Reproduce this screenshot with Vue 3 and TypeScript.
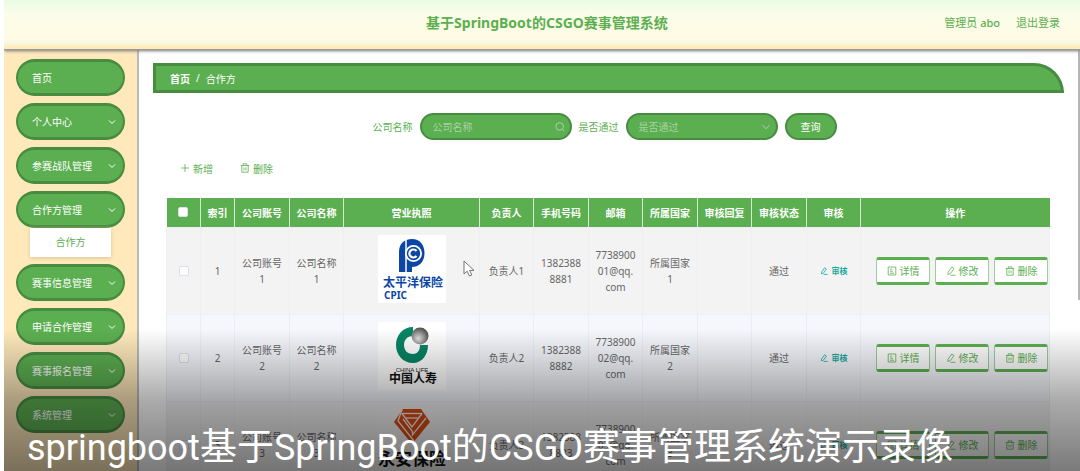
<script setup lang="ts">
interface MenuItem {
  label: string
  arrow: boolean
  child?: string
}

interface Partner {
  id: number
  account: string
  company: string
  owner: string
  phone: string
  email: string
  country: string
}

const menu: MenuItem[] = [
  { label: '首页', arrow: false },
  { label: '个人中心', arrow: true },
  { label: '参赛战队管理', arrow: true },
  { label: '合作方管理', arrow: true, child: '合作方' },
  { label: '赛事信息管理', arrow: true },
  { label: '申请合作管理', arrow: true },
  { label: '赛事报名管理', arrow: true },
  { label: '系统管理', arrow: true },
]

const headings: string[] = [
  '索引', '公司账号', '公司名称', '营业执照', '负责人', '手机号码', '邮箱',
  '所属国家', '审核回复', '审核状态', '审核', '操作',
]

const partners: Partner[] = [1, 2, 3].map((n) => ({
  id: n,
  account: `公司账号\n${n}`,
  company: `公司名称\n${n}`,
  owner: `负责人${n}`,
  phone: `1382388\n888${n}`,
  email: `7738900\n0${n}@qq.\ncom`,
  country: `所属国家\n${n}`,
}))
</script>

<template>
  <div class="page">
    <header class="top">
      <h1>基于SpringBoot的CSGO赛事管理系统</h1>
      <div class="user">
        <span>管理员 <b>abo</b></span>
        <a href="#">退出登录</a>
      </div>
    </header>

    <div class="body">
      <nav class="side">
        <div v-for="item in menu" :key="item.label" class="entry">
          <button type="button" class="pill">
            <span>{{ item.label }}</span>
            <svg v-if="item.arrow" class="chev" viewBox="0 0 8 8"><path d="M1 2.5 4 5.5 7 2.5" /></svg>
          </button>
          <a v-if="item.child" href="#" class="child">{{ item.child }}</a>
        </div>
      </nav>

      <main class="main">
        <div class="crumbs"><b>首页</b><span class="slash">/</span><span>合作方</span></div>

        <form class="search" @submit.prevent>
          <label for="company">公司名称</label>
          <div class="field">
            <input id="company" type="text" placeholder="公司名称" />
            <svg class="field-icon" viewBox="0 0 10 10"><circle cx="4.7" cy="4.5" r="3.8" /><path d="M7.4 7.3 9.2 9.2" /></svg>
          </div>
          <label for="passed">是否通过</label>
          <div class="field">
            <select id="passed">
              <option>是否通过</option>
            </select>
            <svg class="field-icon" viewBox="0 0 10 10"><path d="M1.5 3.2 5 6.8 8.5 3.2" /></svg>
          </div>
          <button type="submit" class="query">查询</button>
        </form>

        <div class="tools">
          <button type="button">
            <svg viewBox="0 0 10 10"><path d="M5 1V9M1 5H9" /></svg>新增
          </button>
          <button type="button">
            <svg viewBox="0 0 10 10"><path d="M.8 2.5H9.2M3.2 2.3V.8H6.8V2.3M1.8 2.6V9.2H8.2V2.6M4 4.4V7.4M6 4.4V7.4" /></svg>删除
          </button>
        </div>

        <table>
          <colgroup>
            <col class="c-small" /><col class="c-small" /><col class="c-wide" /><col class="c-mid" />
            <col class="c-image" /><col class="c-mid" /><col class="c-wide" /><col class="c-mid" />
            <col class="c-wide" /><col class="c-mid" /><col class="c-wide" /><col class="c-mid" /><col />
          </colgroup>
          <thead>
            <tr>
              <th><input type="checkbox" aria-label="全选" /></th>
              <th v-for="h in headings" :key="h">{{ h }}</th>
            </tr>
          </thead>
          <tbody>
            <tr v-for="p in partners" :key="p.id">
              <td><input type="checkbox" :aria-label="p.owner" /></td>
              <td>{{ p.id }}</td>
              <td>{{ p.account }}</td>
              <td>{{ p.company }}</td>
              <td class="license">
                <svg v-if="p.id === 1" class="logo" viewBox="0 0 68 68">
                  <rect width="68" height="68" fill="#fff" />
                  <path d="M21 37V17C21 9 26 4 34 4C42 4 46.500 10 46.500 18C46.500 27 41 32 34 32V37Z" fill="#0b46a5" />
                  <path d="M28 4.500V37.500" stroke="#fff" stroke-width="1.500" />
                  <circle cx="35.500" cy="18.500" r="7.600" fill="#0b46a5" stroke="#fff" stroke-width="1.800" />
                  <path d="M38.500 16A4 4 0 1 0 38.500 21" fill="none" stroke="#fff" stroke-width="2.200" />
                  <text x="5" y="52" class="logo-cn" font-size="12" fill="#0b46a5">太平洋保险</text>
                  <text x="6" y="64" class="logo-en" font-size="10" fill="#0b46a5">CPIC</text>
                </svg>
                <svg v-else-if="p.id === 2" class="logo" viewBox="0 0 68 68">
                  <defs>
                    <radialGradient id="ball" cx="40%" cy="65%" r="65%">
                      <stop offset="0" stop-color="#e4e4e4" /><stop offset="1" stop-color="#4d4d4d" />
                    </radialGradient>
                  </defs>
                  <rect width="68" height="68" fill="#fff" />
                  <path d="M35 5C25 5 18 13 18 23C18 33 25 41 35 41C44 41 50 33 50 23H42C42 29 39 32 35 32C29 32 26 28 26 23C26 18 29 14 35 14Z" fill="#068565" />
                  <circle cx="42" cy="14" r="8.500" fill="url(#ball)" />
                  <text x="34" y="50" class="logo-tag" text-anchor="middle" font-size="6" fill="#222">CHINA LIFE</text>
                  <text x="35" y="61" class="logo-cn" text-anchor="middle" font-size="12" fill="#111">中国人寿</text>
                </svg>
                <svg v-else class="logo" viewBox="0 0 68 68">
                  <rect width="68" height="68" fill="#fff" fill-opacity=".1" />
                  <path d="M25 0H43L52 13 34 35 16 13Z" fill="#dd4a12" />
                  <g fill="none" stroke="#f3f3f3" stroke-width="1.300">
                    <path d="M24 4.500H44" />
                    <path d="M28 9H40" />
                    <path d="M24 1 20 12 36 32" />
                    <path d="M24 4.500 34 18 44 4.500" />
                    <path d="M25 10 34.500 22.500V26L48 9" />
                  </g>
                  <text x="34" y="56" class="logo-cn" text-anchor="middle" font-size="17" fill="#111">永安保险</text>
                  <text x="34" y="66" class="logo-tag" text-anchor="middle" font-size="6" fill="#222">YONG AN INSURANCE</text>
                </svg>
                <svg v-if="p.id === 1" class="cursor" viewBox="0 0 12 17">
                  <path d="M1 1V14L4.200 11.200 6.400 16 8.800 15 6.600 10.400H11Z" fill="#fff" stroke="#666" stroke-width=".9" />
                </svg>
              </td>
              <td>{{ p.owner }}</td>
              <td>{{ p.phone }}</td>
              <td>{{ p.email }}</td>
              <td>{{ p.country }}</td>
              <td></td>
              <td>通过</td>
              <td>
                <button type="button" class="audit">
                  <svg viewBox="0 0 10 10"><path d="M2 6.300 5.800 1 8 2.600 4.200 7.800 1.800 8.400ZM4.500 9.300H9.500" /></svg>审核
                </button>
              </td>
              <td>
                <div class="ops">
                  <button type="button">
                    <svg viewBox="0 0 10 10"><path d="M1.200 1H8.800V9H1.200ZM3 3.200H5M3 5.200H6M3 7.200H7" /></svg>详情
                  </button>
                  <button type="button">
                    <svg viewBox="0 0 10 10"><path d="M2 6.300 5.800 1 8 2.600 4.200 7.800 1.800 8.400ZM4.500 9.300H9.500" /></svg>修改
                  </button>
                  <button type="button">
                    <svg viewBox="0 0 10 10"><path d="M.8 2.500H9.200M3.200 2.300V.8H6.800V2.300M1.800 2.600V9.200H8.200V2.600M4 4.400V7.400M6 4.400V7.400" /></svg>删除
                  </button>
                </div>
              </td>
            </tr>
          </tbody>
        </table>
        <div class="scroll-thumb"></div>
      </main>
    </div>

    <div class="caption">springboot<span>基于</span>SpringBoot<span>的</span>CSGO<span>赛事管理系统演示录像</span></div>
  </div>
</template>

<style>
body {
  background: #fff;
}
</style>

<style scoped>
.page {
  position: relative;
  display: flex;
  flex-direction: column;
  height: 100vh;
  margin-left: 4px;
  overflow: hidden;
  font-family: "Noto Sans", "Noto Sans CJK SC", sans-serif;
  font-size: 10px;
  color: #5caf51;
}

* {
  box-sizing: border-box;
}

button,
input,
select {
  margin: 0;
  font: inherit;
}

button {
  padding: 0;
  border: 0;
  background: none;
  color: inherit;
}

a {
  color: inherit;
  text-decoration: none;
}

svg {
  flex: none;
  fill: none;
  stroke: currentColor;
}

.top {
  position: relative;
  z-index: 1;
  display: grid;
  grid-template-columns: 1fr auto 1fr;
  align-items: center;
  flex: none;
  height: 50px;
  padding: 0 20px 5px 30px;
  border-bottom: 1px solid #999;
  background: linear-gradient(#e8fbe4, #fafde9 28%, #fffbe5 80%, #f6f6df 90%, #ffedb9 94%);
  box-shadow: 0 1px 3px #777;
}

h1 {
  grid-column: 2;
  margin: 0;
  font-size: 14px;
  font-weight: 700;
}

.user {
  display: flex;
  justify-content: flex-end;
  gap: 16px;
  font-size: 11px;
}

.user b {
  font-weight: 500;
}

.body {
  display: flex;
  flex: 1;
  min-height: 0;
}

.side {
  display: flex;
  flex: none;
  flex-direction: column;
  gap: 7px;
  width: 135px;
  padding: 9px 12px 0 12px;
  border-right: 2px solid #b9b9b9;
  background: #ffe9bb;
}

.entry {
  flex: none;
}

.pill {
  display: flex;
  align-items: center;
  justify-content: space-between;
  width: 100%;
  height: 37px;
  padding: 0 7px 0 14px;
  border: 3px solid #488c42;
  border-right-width: 2px;
  border-left-width: 2px;
  border-radius: 19px;
  background: #5caf51;
  color: #fff;
}

.chev {
  width: 8px;
  height: 8px;
}

.child {
  display: block;
  height: 29px;
  margin: 0 14px;
  background: #fff;
  box-shadow: 0 1px 4px #d9c391;
  line-height: 29px;
  text-align: center;
}

.main {
  position: relative;
  flex: 1;
  min-width: 0;
  padding: 13px 16px 0 14px;
}

.crumbs {
  display: flex;
  align-items: center;
  height: 30px;
  padding-left: 14px;
  border: 3px solid #488c42;
  border-radius: 0 30px 0 0;
  background: #5caf51;
  color: #fff;
}

.slash {
  margin: 0 6px;
}

.search {
  display: flex;
  align-items: center;
  justify-content: center;
  gap: 7px;
  margin-top: 20px;
  padding-right: 8px;
}

.field {
  position: relative;
  width: 152px;
}

.field input,
.field select,
.query {
  display: block;
  width: 100%;
  height: 27px;
  border: 2px solid #488c42;
  border-radius: 14px;
  background: #5caf51;
}

.field input,
.field select {
  padding: 0 24px 0 11px;
  appearance: none;
  color: #a9d3a2;
}

.field input::placeholder {
  color: #a9d3a2;
  opacity: 1;
}

.field-icon {
  position: absolute;
  top: 9px;
  right: 7px;
  width: 10px;
  height: 10px;
  color: #a9d3a2;
}

.search .query {
  width: 52px;
  color: #fff;
}

.tools {
  display: flex;
  gap: 27px;
  margin: 20px 0 22px 27px;
}

.tools button {
  display: flex;
  align-items: center;
  gap: 3px;
  height: 16px;
}

.tools svg,
.ops svg {
  width: 10px;
  height: 10px;
  stroke-width: .8;
}

table {
  width: calc(100% - 27px);
  margin-left: 13px;
  border-collapse: collapse;
  table-layout: fixed;
  color: #666;
  text-align: center;
}

.c-small {
  width: 34px;
}

.c-mid {
  width: 54px;
}

.c-wide {
  width: 55px;
}

.c-image {
  width: 136px;
}

th {
  height: 29px;
  padding: 0;
  border-left: 1px solid #d5ebd1;
  background: #5caf51;
  color: #fff;
  font-weight: 700;
}

th:first-child {
  border-left: 0;
}

td {
  height: 87px;
  padding: 0;
  border: 1px solid #ebeef5;
  line-height: 16px;
  white-space: pre-line;
}

tbody tr {
  background: #f3f3f3;
}

tbody tr:nth-child(2) {
  background: #f5f7fc;
}

input[type="checkbox"] {
  display: block;
  width: 10px;
  height: 10px;
  margin: 0 auto;
  appearance: none;
  border: 1px solid #dcdfe6;
  border-radius: 2px;
  background: #fff;
}

.license {
  position: relative;
}

.logo {
  display: block;
  width: 68px;
  height: 68px;
  margin: 0 auto 4px;
  stroke: none;
}

.logo-cn {
  font-family: "Noto Sans CJK SC", sans-serif;
  font-weight: 700;
}

.logo-en {
  font-family: "Noto Sans", sans-serif;
  font-weight: 700;
}

.logo-tag {
  font-family: "Liberation Sans", sans-serif;
}

.cursor {
  position: absolute;
  top: 32px;
  left: 119px;
  width: 12px;
  height: 17px;
}

.audit {
  display: inline-flex;
  align-items: center;
  gap: 4px;
  color: #16a99a;
  font-size: 8px;
  font-weight: 700;
}

.audit svg {
  width: 8px;
  height: 8px;
}

.ops {
  display: flex;
  justify-content: flex-end;
  gap: 5px;
  padding-right: 1px;
}

.ops button {
  display: flex;
  align-items: center;
  justify-content: center;
  gap: 3px;
  width: 54px;
  height: 28px;
  border: 1px solid #9ccf96;
  border-top: 3px solid #5caf51;
  border-bottom: 3px solid #5caf51;
  border-radius: 3px;
  background: #fff;
  color: #5caf51;
}

.scroll-thumb {
  position: absolute;
  top: 0;
  right: 0;
  width: 2px;
  height: 250px;
  background: #b5b5b5;
}

.caption {
  position: absolute;
  right: 0;
  bottom: 0;
  left: 0;
  z-index: 2;
  height: 142px;
  padding: 95px 0 0 23px;
  background: linear-gradient(rgba(0, 0, 0, 0), rgba(0, 0, 0, .33) 50%, rgba(0, 0, 0, .52));
  color: #fff;
  font-family: Roboto, "Noto Sans CJK SC", sans-serif;
  font-size: 36px;
  font-weight: 400;
  line-height: 48px;
  white-space: nowrap;
}

.caption span {
  font-size: 37px;
}
</style>
